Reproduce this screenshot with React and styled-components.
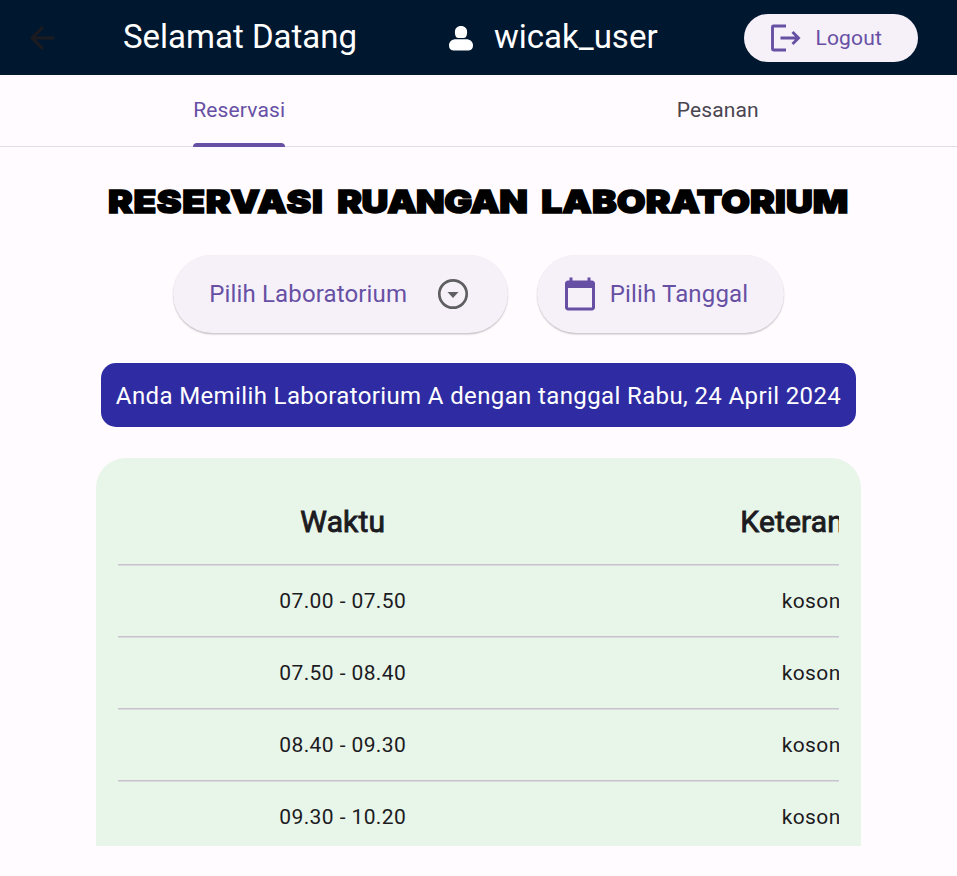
import React from "react";
import styled, { createGlobalStyle } from "styled-components";

const GlobalStyle = createGlobalStyle`
  *, *::before, *::after { box-sizing: border-box; }
  body {
    margin: 0;
    background: #fffbff;
    font-family: Roboto, "Liberation Sans", sans-serif;
    color: #1c1b1f;
    overflow: hidden;
  }
`;

const Page = styled.div`
  width: 957px;
  height: 876px;
  display: flex;
  flex-direction: column;
  overflow: hidden;
`;

const AppBar = styled.header`
  height: 75px;
  flex: none;
  display: flex;
  align-items: center;
  background: #001730;
  color: #fff;
`;

const BackButton = styled.button`
  width: 84px;
  height: 72px;
  display: flex;
  align-items: center;
  justify-content: center;
  padding: 0;
  border: 0;
  background: none;
  color: #1c1b1f;
`;

const Greeting = styled.h1`
  width: 326px;
  margin: 0;
  padding-left: 39px;
  font-size: 33px;
  font-weight: 400;
  line-height: 42px;
  white-space: nowrap;
  margin-top: -2px;
`;

const User = styled.div`
  width: 333.5px;
  display: flex;
  align-items: center;
  padding-left: 39px;
`;

const UserName = styled.span`
  margin: -2px 0 0 21px;
  font-size: 33px;
  line-height: 42px;
`;

const LogoutButton = styled.button`
  width: 174.5px;
  height: 48px;
  display: flex;
  align-items: center;
  padding: 0 0 0 23px;
  gap: 13px;
  border: 0;
  border-radius: 24px;
  background: #f6f1f9;
  color: #6750a4;
  font: 400 21px/30px Roboto, sans-serif;
  letter-spacing: 0.15px;
`;

const Tabs = styled.nav`
  height: 72px;
  flex: none;
  display: grid;
  grid-template-columns: 1fr 1fr;
  justify-items: center;
  border-bottom: 1.5px solid #e2dbe9;
`;

const Tab = styled.button`
  height: 72px;
  display: flex;
  flex-direction: column;
  justify-content: space-between;
  padding: 20px 0 0;
  border: 0;
  background: none;
  color: ${(p) => (p.$active ? "#6750a4" : "#49454f")};
  font: 400 21px/30px Roboto, sans-serif;
  letter-spacing: 0.15px;

  &::after {
    content: "";
    width: 100%;
    height: 4.5px;
    border-radius: 4.5px 4.5px 0 0;
    background: ${(p) => (p.$active ? "#6750a4" : "transparent")};
  }
`;

const Content = styled.main`
  display: flex;
  flex-direction: column;
  align-items: center;
`;

const Heading = styled.h2`
  display: flex;
  justify-content: center;
  gap: 12px;
  height: 48px;
  margin: 31px 0 29px;
  color: #000;
  font: 900 32px/48px Inter, sans-serif;
  -webkit-text-stroke: 1.5px #000;
  white-space: nowrap;
  transform: scaleX(1.16);
`;

const Word = styled.span`
  letter-spacing: ${(p) => p.$tracking};
`;

const Filters = styled.div`
  display: flex;
  gap: 29.5px;
`;

const FilterButton = styled.button`
  width: ${(p) => p.$width};
  height: 78px;
  display: flex;
  align-items: center;
  gap: ${(p) => p.$gap};
  padding: 0 0 0 ${(p) => p.$inset};
  border: 0;
  border-radius: 39px;
  background: #f6f1f9;
  box-shadow: 0 1.5px 1.5px rgba(0, 0, 0, 0.2), 0 0 1px rgba(0, 0, 0, 0.08);
  color: #6750a4;
  font: 400 24px/36px Roboto, sans-serif;
  letter-spacing: 0.15px;
  white-space: nowrap;
`;

const Selection = styled.p`
  width: 755px;
  height: 64px;
  margin: 30px 0 31px;
  padding-top: 2px;
  display: flex;
  align-items: center;
  justify-content: center;
  border-radius: 15px;
  background: #2f2ca3;
  color: #fff;
  font-size: 24px;
  letter-spacing: 0.375px;
  white-space: nowrap;
`;

const Card = styled.section`
  width: 765px;
  height: 388px;
  padding: 22px 22px 0;
  border-radius: 30px 30px 0 0;
  background: #e8f5e9;
  overflow: hidden;
`;

const TableViewport = styled.div`
  overflow: hidden;
`;

const Row = styled.div`
  width: 949px;
  height: ${(p) => (p.$head ? "84px" : "72px")};
  padding: ${(p) => (p.$head ? "0 0 2px" : "2px 0 0")};
  display: grid;
  grid-template-columns: 449.5px 499.5px;
  align-items: center;
  text-align: center;
  font-size: ${(p) => (p.$head ? "30px" : "21px")};
  letter-spacing: ${(p) => (p.$head ? "0.15px" : "0.4px")};
  -webkit-text-stroke: ${(p) => (p.$head ? "0.9px #1c1b1f" : "0")};
  box-shadow: ${(p) => (p.$head ? "none" : "inset 0 1px #c7c2ce, inset 0 2px #d8dbdb")};
`;

const Icon = styled.svg`
  width: ${(p) => p.$w || 36}px;
  height: ${(p) => p.$h || p.$w || 36}px;
  flex: none;
  fill: currentColor;
`;

const times = ["07.00 - 07.50", "07.50 - 08.40", "08.40 - 09.30", "09.30 - 10.20"];

export default function App() {
  return (
    <Page>
      <GlobalStyle />
      <AppBar>
        <BackButton aria-label="Kembali">
          <Icon viewBox="0 0 24 24">
            <path d="M20 11H7.83l5.59-5.59L12 4l-8 8 8 8 1.41-1.41L7.83 13H20v-2z" />
          </Icon>
        </BackButton>
        <Greeting>Selamat Datang</Greeting>
        <User>
          <Icon $w={24} $h={26} viewBox="0 0 24 26">
            <path d="M12 1c3.8 0 6.100 2.500 6.100 6 0 3-1 6-3.200 6H9.100C6.900 13 5.900 10 5.900 7c0-3.500 2.300-6 6.100-6z" />
            <path d="M7 14.300h10c4.500 0 7 2.700 7 6 0 3.300-1.400 5.200-4.300 5.200H4.300C1.400 25.500 0 23.600 0 20.300c0-3.300 2.500-6 7-6z" />
          </Icon>
          <UserName>wicak_user</UserName>
        </User>
        <LogoutButton>
          <Icon viewBox="0 0 36 36" $w={36}>
            <path
              d="M19 6H6.500Q5.500 6 5.500 7V29Q5.500 30 6.500 30H19M13.500 18H30M25.500 12L31.500 18L25.500 24"
              fill="none"
              stroke="currentColor"
              strokeWidth="2.900"
            />
          </Icon>
          Logout
        </LogoutButton>
      </AppBar>
      <Tabs>
        <Tab $active>Reservasi</Tab>
        <Tab>Pesanan</Tab>
      </Tabs>
      <Content>
        <Heading>
          <Word $tracking="0.6px">RESERVASI</Word>
          <Word $tracking="-0.45px">RUANGAN</Word>
          <Word $tracking="0.1px">LABORATORIUM</Word>
        </Heading>
        <Filters>
          <FilterButton $width="335px" $inset="36.5px" $gap="28px">
            Pilih Laboratorium
            <Icon viewBox="0 0 36 36">
              <circle cx="18" cy="18" r="13.700" fill="none" stroke="#5f5e60" strokeWidth="2.700" />
              <path d="M12.500 16h11L18 22z" fill="#5f5e60" />
            </Icon>
          </FilterButton>
          <FilterButton $width="247px" $inset="24.5px" $gap="12px">
            <Icon viewBox="0 0 24 24">
              <path d="M20 3h-1V1h-2v2H7V1H5v2H4c-1.100 0-2 .9-2 2v16c0 1.100.9 2 2 2h16c1.100 0 2-.9 2-2V5c0-1.100-.9-2-2-2zm0 18H4V8h16v13z" />
            </Icon>
            Pilih Tanggal
          </FilterButton>
        </Filters>
        <Selection>Anda Memilih Laboratorium A dengan tanggal Rabu, 24 April 2024</Selection>
        <Card>
          <TableViewport>
            <Row $head>
              <span>Waktu</span>
              <span>Keterangan</span>
            </Row>
            {times.map((time) => (
              <Row key={time}>
                <span>{time}</span>
                <span>kosong</span>
              </Row>
            ))}
          </TableViewport>
        </Card>
      </Content>
    </Page>
  );
}
